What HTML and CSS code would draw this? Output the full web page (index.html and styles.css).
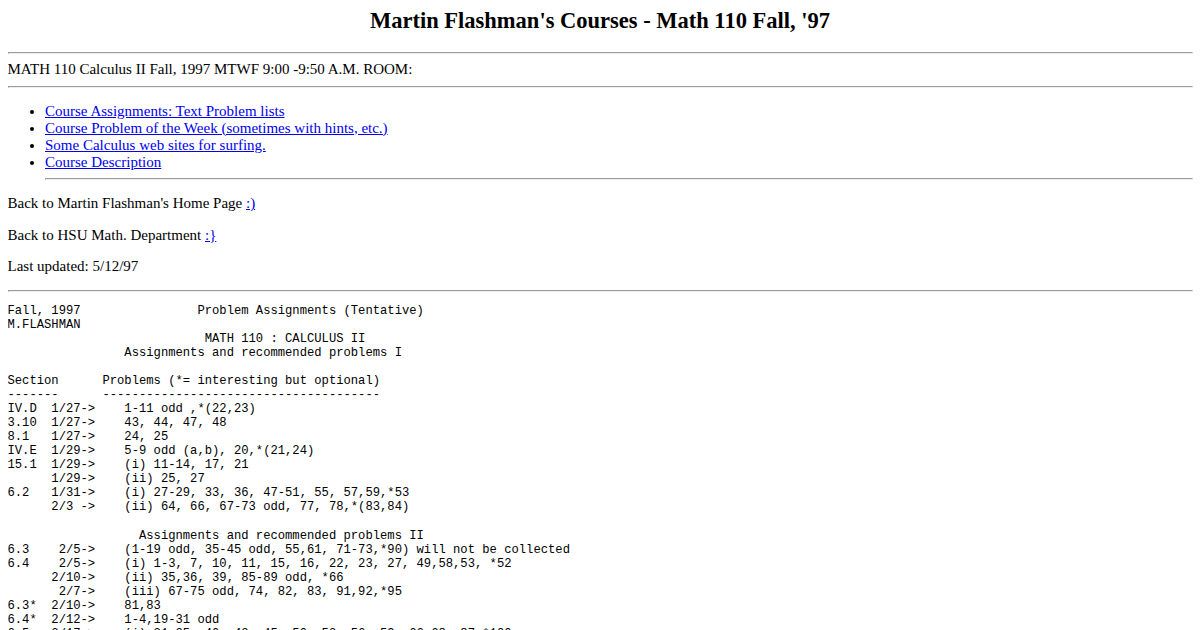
FILE: index.html
```html
<!DOCTYPE html>
<html>
<head>
<meta charset="utf-8">
<title>Martin Flashman's Courses - Math 110 Fall, '97</title>
<link rel="stylesheet" href="styles.css">
</head>
<body class="page">
<h2 class="title">Martin Flashman's Courses - Math 110 Fall, '97</h2>
<hr class="rule">
<div class="info">MATH 110 Calculus II Fall, 1997 MTWF 9:00 -9:50 A.M. ROOM:</div>
<hr class="rule">
<ul class="links">
<li><a class="link" href="#assign">Course Assignments: Text Problem lists</a></li>
<li><a class="link" href="#potw">Course Problem of the Week (sometimes with hints, etc.)</a></li>
<li><a class="link" href="#sites">Some Calculus web sites for surfing.</a></li>
<li><a class="link" href="#desc">Course Description</a></li>
<hr class="rule">
</ul>
<p class="para">Back to Martin Flashman's Home Page <a class="link" href="#home">:)</a></p>
<p class="para">Back to HSU Math. Department <a class="link" href="#dept">:}</a></p>
<p class="para">Last updated: 5/12/97</p>
<hr class="rule">
<pre class="assignments">Fall, 1997                Problem Assignments (Tentative)
M.FLASHMAN
                           MATH 110 : CALCULUS II
                Assignments and recommended problems I

Section      Problems (*= interesting but optional)
-------      --------------------------------------
IV.D  1/27->    1-11 odd ,*(22,23)
3.10  1/27->    43, 44, 47, 48
8.1   1/27->    24, 25
IV.E  1/29->    5-9 odd (a,b), 20,*(21,24)
15.1  1/29->    (i) 11-14, 17, 21
      1/29->    (ii) 25, 27
6.2   1/31->    (i) 27-29, 33, 36, 47-51, 55, 57,59,*53
      2/3 ->    (ii) 64, 66, 67-73 odd, 77, 78,*(83,84)

                  Assignments and recommended problems II
6.3    2/5->    (1-19 odd, 35-45 odd, 55,61, 71-73,*90) will not be collected
6.4    2/5->    (i) 1-3, 7, 10, 11, 15, 16, 22, 23, 27, 49,58,53, *52
      2/10->    (ii) 35,36, 39, 85-89 odd, *66
       2/7->    (iii) 67-75 odd, 74, 82, 83, 91,92,*95
6.3*  2/10->    81,83
6.4*  2/12->    1-4,19-31 odd
6.5   2/17->    (i) 21-25, 40, 42, 45, 50, 53, 56, 59, 66,68, 87,*100
      2/17->    (ii) 1-9 odd, 15, 17
</pre>
</body>
</html>
```
FILE: styles.css
```css
html {
  background: #ffffff;
}

.page {
  margin: 7.5px;
  font-family: "Liberation Serif", "Times New Roman", serif;
  font-size: 15px;
  color: #000000;
}

.title {
  margin: 0 0 18px;
  font-size: 22.5px;
  font-weight: bold;
  text-align: center;
}

.rule {
  margin: 7.5px auto;
  border: 1px inset;
  color: gray;
  overflow: hidden;
}

.info {
  margin: 0;
}

.links {
  margin: 15px 0;
  padding-left: 37.5px;
}

.link {
  color: #0000ee;
  text-decoration: underline;
}

.para {
  margin: 14.5px 0;
}

.assignments {
  margin: 12px 0;
  font-family: "Liberation Mono", "Courier New", monospace;
  font-size: 12.1875px;
  line-height: 14.06px;
}
```
